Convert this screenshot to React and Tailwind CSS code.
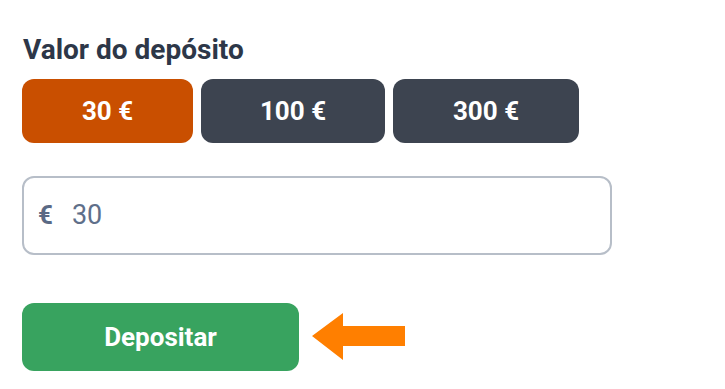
import { useState } from "react";

const amounts = [
    { label: "30 €", value: 30, w: "w-[171px]" },
    { label: "100 €", value: 100, w: "w-[184px]" },
    { label: "300 €", value: 300, w: "w-[186px]" },
];

const App = () => {
    const [amount, setAmount] = useState(30);

    return (
        <div className="min-h-screen bg-white font-['Roboto',sans-serif] pl-[22px] pt-[34px]">
            <h2 className="text-[28px] font-bold text-[#2d3748] leading-[32px] pl-px">Valor do depósito</h2>
            <div className="flex gap-2 mt-[13px]">
                {amounts.map((a) => (
                    <button
                        key={a.value}
                        onClick={() => setAmount(a.value)}
                        className={`${a.w} h-[64px] rounded-[12px] text-white font-bold text-[26px] ${amount === a.value ? "bg-[#c94f00]" : "bg-[#3d4450]"}`}
                    >
                        {a.label}
                    </button>
                ))}
            </div>
            <div className="mt-[33px] w-[590px] h-[79px] border-2 border-[#b7bec8] rounded-[12px] flex items-center px-[14px]">
                <span className="text-[26px] font-bold text-[#5a6a85]">€</span>
                <input
                    value={amount}
                    onChange={(e) => setAmount(e.target.value)}
                    className="ml-[19px] flex-1 outline-none text-[27px] text-[#5f6f8a] bg-transparent"
                />
            </div>
            <div className="flex items-center mt-[48px]">
                <button className="w-[277px] h-[68px] rounded-[12px] bg-[#38a35f] text-white font-bold text-[26px]">
                    Depositar
                </button>
                <svg className="ml-[13px]" width="94" height="50" viewBox="0 0 94 50">
                    <polygon points="0,24 31,1 31,14 93,14 93,34 31,34 31,48" fill="#ff7f00" />
                </svg>
            </div>
        </div>
    );
};

export default App;
